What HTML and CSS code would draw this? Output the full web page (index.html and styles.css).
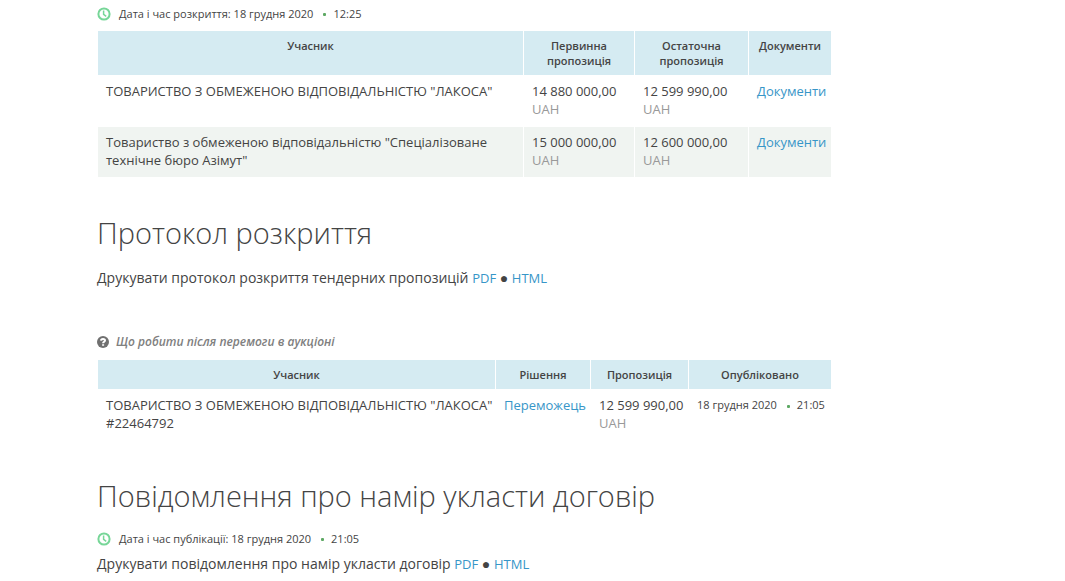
FILE: index.html
```
<!DOCTYPE html>
<html lang="uk">
<head>
<meta charset="utf-8">
<title>Протокол розкриття</title>
<link rel="stylesheet" href="styles.css">
</head>
<body>
<main class="content">
  <p class="stamp">
    <svg class="clock" viewBox="0 0 14 14" aria-hidden="true"><circle cx="7" cy="7" r="5.6"/><path d="M6.6 3.4V7.4L9.2 9.4"/></svg>
    <span>Дата і час розкриття: 18 грудня 2020</span><i class="dot"></i><span>12:25</span>
  </p>
  <table class="grid bids">
    <colgroup><col><col class="c-first"><col class="c-last"><col class="c-docs"></colgroup>
    <thead><tr><th>Учасник</th><th>Первинна пропозиція</th><th>Остаточна пропозиція</th><th>Документи</th></tr></thead>
    <tbody>
      <tr><td>ТОВАРИСТВО З ОБМЕЖЕНОЮ ВІДПОВІДАЛЬНІСТЮ "ЛАКОСА"</td><td>14 880 000,00 <span class="cur">UAH</span></td><td>12 599 990,00 <span class="cur">UAH</span></td><td><a href="#">Документи</a></td></tr>
      <tr><td>Товариство з обмеженою відповідальністю "Спеціалізоване<br>технічне бюро Азімут"</td><td>15 000 000,00 <span class="cur">UAH</span></td><td>12 600 000,00 <span class="cur">UAH</span></td><td><a href="#">Документи</a></td></tr>
    </tbody>
  </table>

  <h2>Протокол розкриття</h2>
  <p class="print">Друкувати протокол розкриття тендерних пропозицій <a href="#">PDF</a> ● <a href="#">HTML</a></p>

  <p class="hint">
    <svg class="help" viewBox="0 0 12 12" aria-hidden="true"><circle cx="6" cy="6" r="6"/><path d="M4 4.6C4.1 2.4 8 2.4 8 4.5C8 5.8 6.1 5.8 6.1 7.3M6.1 8.3V9.8"/></svg>
    <span>Що робити після перемоги в аукціоні</span>
  </p>
  <table class="grid awards">
    <colgroup><col><col class="c-decision"><col class="c-offer"><col class="c-date"></colgroup>
    <thead><tr><th>Учасник</th><th>Рішення</th><th>Пропозиція</th><th>Опубліковано</th></tr></thead>
    <tbody>
      <tr><td>ТОВАРИСТВО З ОБМЕЖЕНОЮ ВІДПОВІДАЛЬНІСТЮ "ЛАКОСА"<br>#22464792</td><td><a href="#">Переможець</a></td><td>12 599 990,00 <span class="cur">UAH</span></td><td class="when"><span>18 грудня 2020</span><i class="dot"></i><span>21:05</span></td></tr>
    </tbody>
  </table>

  <h2>Повідомлення про намір укласти договір</h2>
  <p class="stamp">
    <svg class="clock" viewBox="0 0 14 14" aria-hidden="true"><circle cx="7" cy="7" r="5.6"/><path d="M6.6 3.4V7.4L9.2 9.4"/></svg>
    <span>Дата і час публікації: 18 грудня 2020</span><i class="dot"></i><span>21:05</span>
  </p>
  <p class="print">Друкувати повідомлення про намір укласти договір <a href="#">PDF</a> ● <a href="#">HTML</a></p>
</main>
</body>
</html>
```
FILE: styles.css
```
body {
  margin: 0;
  background: #fff;
  color: #444;
  font: 13px/18px "Open Sans", "Noto Sans", sans-serif;
}
.content {
  max-width: 735px;
  margin: 0 97px;
  padding-top: 4px;
}
p { margin: 0; }
a { color: #3796c8; text-decoration: none; }
.stamp {
  display: flex;
  align-items: center;
  font-size: 11px;
  line-height: 20px;
}
.clock {
  width: 14px;
  height: 14px;
  margin-right: 8px;
  fill: none;
  stroke: #77d698;
  stroke-width: 2;
}
.clock path { stroke-width: 1.5; }
.dot {
  display: inline-block;
  width: 3px;
  height: 3px;
  margin: 0 7px 0 10px;
  border-radius: 1px;
  background: #5da863;
  vertical-align: middle;
}
.grid {
  width: 100%;
  table-layout: fixed;
  border-collapse: separate;
  border-spacing: 1px;
}
.bids { margin-top: 6px; }
.grid th {
  padding: 7px 8px;
  background: #d5ebf2;
  font-size: 11px;
  font-weight: 600;
  line-height: 15px;
  vertical-align: top;
}
.grid td { padding: 6px 2px 8px 8px; vertical-align: top; }
.bids tbody tr:nth-child(even) td { background: #f0f4f1; }
.c-first { width: 110px; }
.c-last { width: 113px; }
.c-docs { width: 82px; }
.c-decision { width: 94px; }
.c-offer { width: 97px; }
.c-date { width: 142px; }
.cur { color: #999; }
.grid .when { font-size: 11px; white-space: nowrap; }
h2 {
  margin: 32px 0 7px;
  font-size: 29px;
  font-weight: 300;
  line-height: 46px;
}
h2 + .stamp { margin-top: 10px; }
.print { font-size: 14px; line-height: 30px; }
.print a { font-size: 13px; }
.hint {
  display: flex;
  align-items: center;
  gap: 7px;
  margin: 40px 0 8px;
  color: #808080;
  font-size: 12px;
  font-style: italic;
  font-weight: 600;
}
.help { width: 12px; height: 12px; fill: #707070; }
.help path { fill: none; stroke: #fff; stroke-width: 2; }
```
